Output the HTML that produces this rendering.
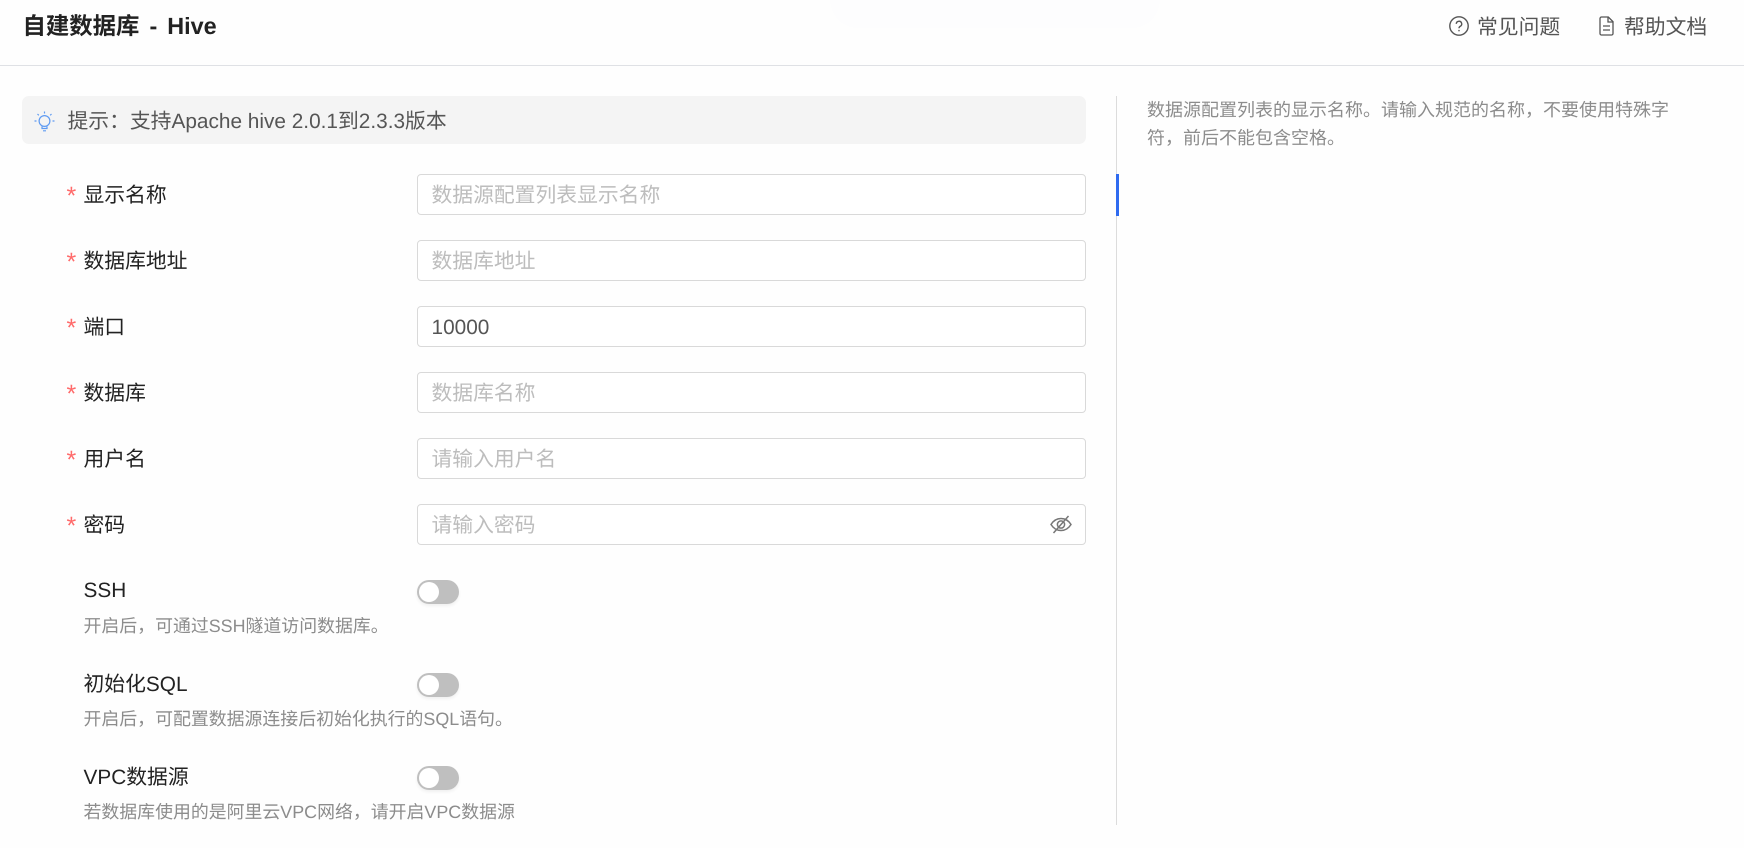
<!DOCTYPE html>
<html lang="zh-CN">
<head>
<meta charset="utf-8">
<title>自建数据库 - Hive</title>
<style>
*{box-sizing:border-box}
html,body{margin:0;padding:0;width:1744px;height:848px;overflow:hidden;background:#fefefe}
body{position:relative;font-family:"Liberation Sans","Noto Sans CJK SC",sans-serif;color:#222;text-rendering:geometricPrecision}
.t{position:absolute;white-space:nowrap;line-height:30px;height:30px}
.lab{left:83.5px;font-size:20.8px;color:#222}
.star{position:absolute;left:66.5px;font-size:25px;line-height:30px;height:30px;color:#ff6a6a}
.inp{position:absolute;left:417px;width:669px;height:41px;border:1px solid #d9d9d9;border-radius:4px;background:#fff;font-size:20.8px;line-height:41px;padding-left:13.5px;color:#bdbdbd;white-space:nowrap}
.help{left:83.5px;font-size:17.9px;color:#8c8c8c}
.sw{position:absolute;left:417px;width:42px;height:24px;border-radius:12px;background:#bfbfbf;box-shadow:0 2px 3px rgba(0,0,0,.06)}
.sw i{position:absolute;left:2px;top:2px;width:20px;height:20px;border-radius:50%;background:#fff;display:block}
svg{position:absolute;overflow:visible}
</style>
</head>
<body>
<div style="position:absolute;left:830px;top:0;width:330px;height:28px;background:#fdfdfe;border-radius:0 0 60px 60px"></div>
<div class="t" style="left:22.5px;top:11px;font-size:23.4px;font-weight:700;color:#222;word-spacing:3.5px">自建数据库 - Hive</div>

<svg style="left:1449px;top:16px" width="20" height="20" viewBox="0 0 20 20" fill="none" stroke="#555" stroke-width="1.4"><circle cx="10" cy="10" r="9.2"/><path d="M7.3 7.9a2.7 2.7 0 1 1 4 2.4c-.9.5-1.3 1-1.3 2"/><circle cx="10" cy="14.6" r=".5" fill="#555" stroke-width=".6"/></svg>
<div class="t" style="left:1477px;top:12.500px;font-size:20.8px;color:#555">常见问题</div>
<svg style="left:1598.500px;top:16px" width="15" height="20" viewBox="0 0 15 20" fill="none" stroke="#555" stroke-width="1.3"><path d="M2.5 1h6.8l4.7 4.7V17.5a1.5 1.5 0 0 1-1.5 1.5h-10A1.5 1.5 0 0 1 1 17.5V2.500A1.500 1.500 0 0 1 2.500 1z"/><path d="M9 1v5h5M4 10h7M4 14h7"/></svg>
<div class="t" style="left:1624px;top:12.500px;font-size:20.8px;color:#555">帮助文档</div>
<div style="position:absolute;left:0;top:65px;width:1744px;height:1px;background:#dfe1e5"></div>

<div style="position:absolute;left:22px;top:96px;width:1064px;height:48px;background:#f4f4f4;border-radius:7px"></div>
<svg style="left:34px;top:111px" width="21" height="21" viewBox="0 0 21 21" fill="none" stroke="#5f9bf2" stroke-width="1.200"><circle cx="10.500" cy="10" r="5.400"/><path d="M8 15.500v2h5v-2M9 19.800h3M10.500 .5v2M3.500 3l1.300 1.300M17.500 3l-1.300 1.300M.5 10h2M18.500 10h2"/></svg>
<div class="t" style="left:67.500px;top:107.200px;font-size:20.8px;color:#555">提示：支持Apache hive 2.0.1到2.3.3版本</div>

<div class="star" style="top:181px">*</div><div class="t lab" style="top:180.500px">显示名称</div>
<div class="inp" style="top:174px">数据源配置列表显示名称</div>
<div class="star" style="top:247px">*</div><div class="t lab" style="top:246.500px">数据库地址</div>
<div class="inp" style="top:240px">数据库地址</div>
<div class="star" style="top:313px">*</div><div class="t lab" style="top:312.500px">端口</div>
<div class="inp" style="top:306px;color:#555">10000</div>
<div class="star" style="top:379px">*</div><div class="t lab" style="top:378.500px">数据库</div>
<div class="inp" style="top:372px">数据库名称</div>
<div class="star" style="top:445px">*</div><div class="t lab" style="top:444.500px">用户名</div>
<div class="inp" style="top:438px">请输入用户名</div>
<div class="star" style="top:511px">*</div><div class="t lab" style="top:510.500px">密码</div>
<div class="inp" style="top:504px">请输入密码</div>
<svg style="left:1050px;top:515px" width="22" height="19" viewBox="0 0 22 19" fill="none" stroke="#777" stroke-width="1.500"><path d="M1 9.500C3.500 5.500 7 3.500 11 3.500s7.500 2 10 6c-2.500 4-6 6-10 6s-7.500-2-10-6z"/><circle cx="11" cy="9.500" r="3.600"/><path d="M3.500 18L18.500 1"/></svg>

<div class="t lab" style="top:576px">SSH</div>
<div class="sw" style="top:580px"><i></i></div>
<div class="t help" style="top:611px">开启后，可通过SSH隧道访问数据库。</div>
<div class="t lab" style="top:670px">初始化SQL</div>
<div class="sw" style="top:673px"><i></i></div>
<div class="t help" style="top:704px">开启后，可配置数据源连接后初始化执行的SQL语句。</div>
<div class="t lab" style="top:763px">VPC数据源</div>
<div class="sw" style="top:766px"><i></i></div>
<div class="t help" style="top:797px">若数据库使用的是阿里云VPC网络，请开启VPC数据源</div>

<div style="position:absolute;left:1116px;top:96px;width:1px;height:729px;background:#dcdcdc"></div>
<div style="position:absolute;left:1116px;top:174px;width:3px;height:42px;background:#2f6bf0"></div>
<div class="t" style="left:1147px;top:94.500px;font-size:18px;color:#8c8c8c">数据源配置列表的显示名称。请输入规范的名称，不要使用特殊字</div>
<div class="t" style="left:1147px;top:122.500px;font-size:18px;color:#8c8c8c">符，前后不能包含空格。</div>
</body>
</html>
